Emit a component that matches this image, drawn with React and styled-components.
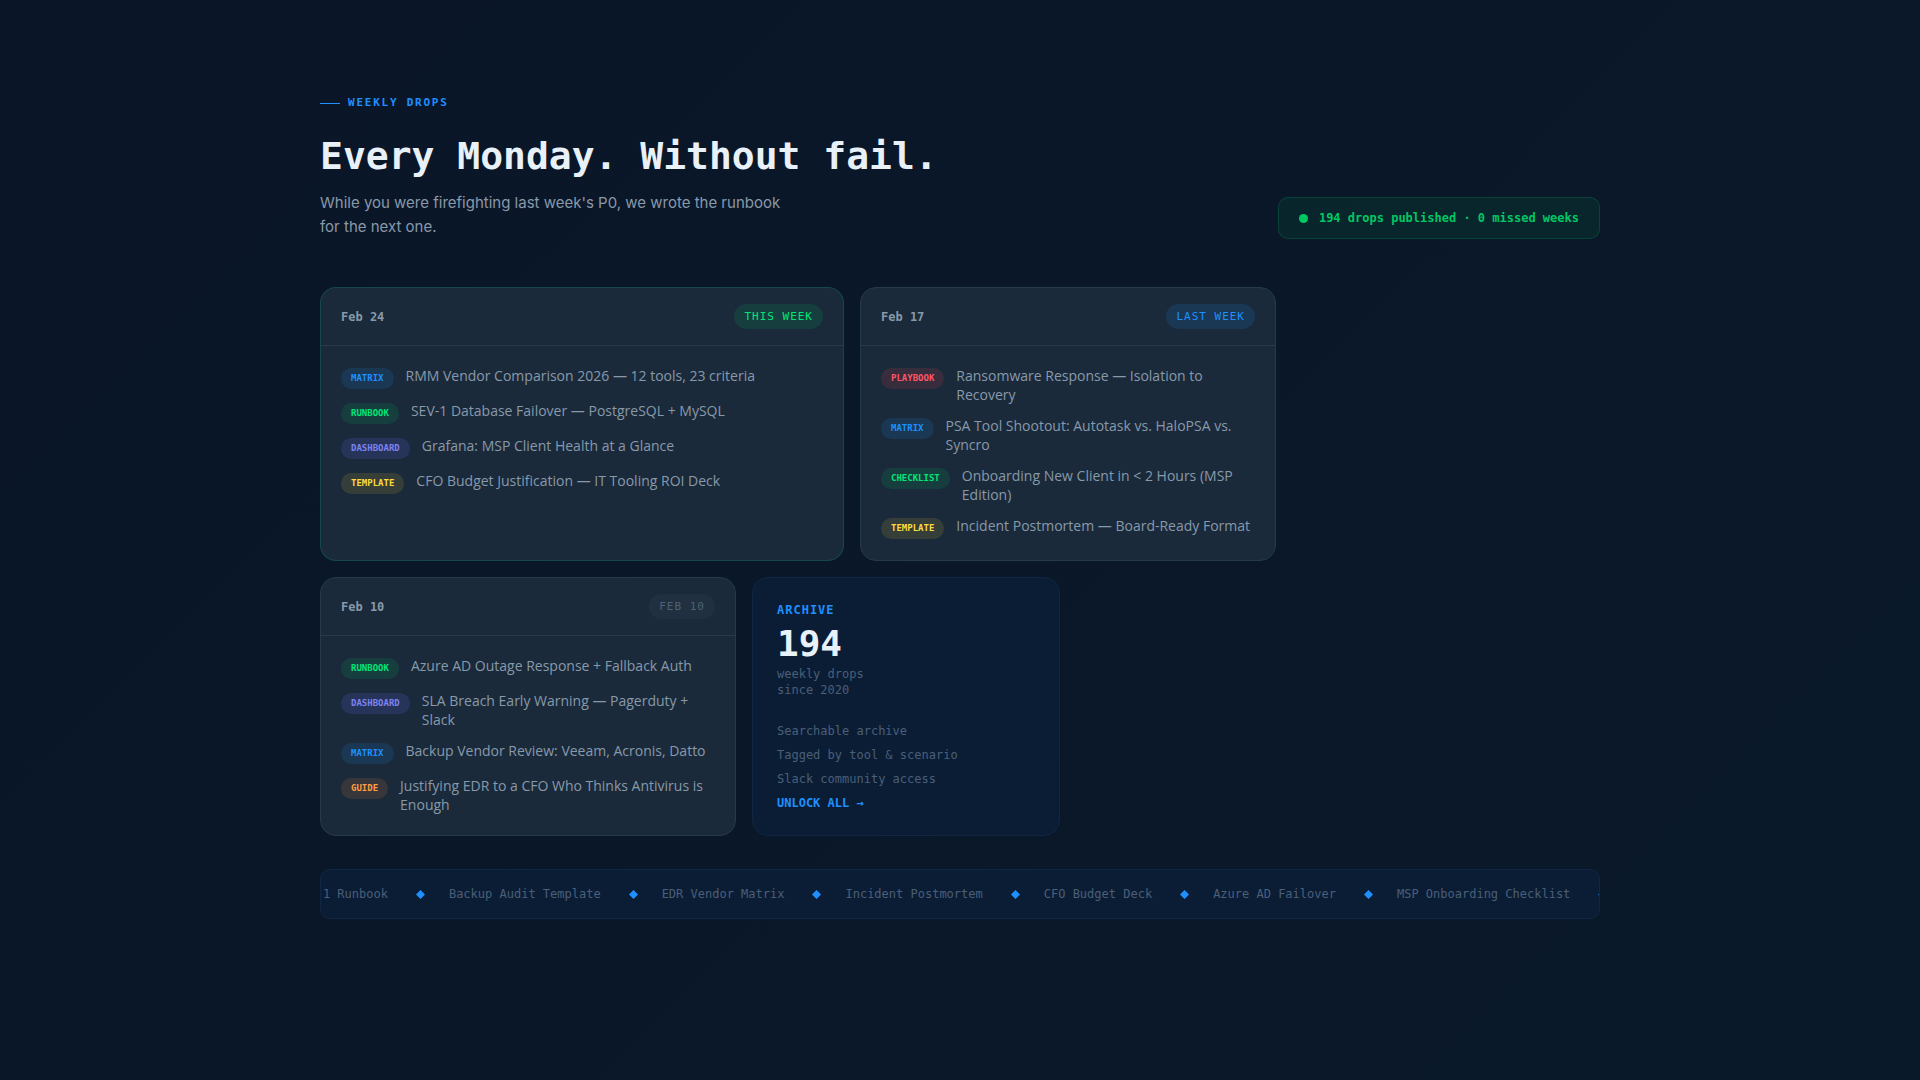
import styled, { createGlobalStyle, css } from "styled-components";

const mono = '"DejaVu Sans Mono", "Liberation Mono", monospace';
const sans = '"Open Sans", "Liberation Sans", sans-serif';

const GlobalStyle = createGlobalStyle`
  * {
    box-sizing: border-box;
  }
  body {
    margin: 0;
    min-height: 100vh;
    background: linear-gradient(135deg, #0a1628 0%, #0a1929 100%);
    color: #e8f0f8;
    font-family: ${sans};
  }
`;

const Section = styled.section`
  max-width: 1360px;
  margin: 0 auto;
  padding: 95px 40px;
`;

const Header = styled.header`
  display: flex;
  justify-content: space-between;
  align-items: flex-end;
  gap: 32px;
  margin-bottom: 48px;
`;

const Eyebrow = styled.p`
  display: flex;
  align-items: center;
  gap: 8px;
  margin: 0 0 22px;
  font: 700 11px/16px ${mono};
  letter-spacing: 0.16em;
  color: #1e90ff;
  &::before {
    content: "";
    width: 20px;
    height: 1px;
    background: #1e90ff;
  }
`;

const Title = styled.h2`
  margin: 0 0 12px;
  font: 700 38px/46px ${mono};
`;

const Lead = styled.p`
  max-width: 480px;
  margin: 0;
  font-family: Inter, ${sans};
  font-size: 15px;
  line-height: 24px;
  color: #8899aa;
`;

const Streak = styled.div`
  display: flex;
  align-items: center;
  gap: 11px;
  flex-shrink: 0;
  padding: 12px 20px;
  border: 1px solid rgba(0, 200, 100, 0.18);
  border-radius: 10px;
  background: rgba(0, 200, 100, 0.08);
  font: 700 12px/16px ${mono};
  color: #00c864;
`;

const Dot = styled.span`
  width: 9px;
  height: 9px;
  border-radius: 50%;
  background: #00c864;
`;

const Grid = styled.div`
  display: grid;
  grid-template-columns: repeat(12, 1fr);
  gap: 16px;
`;

const Card = styled.article`
  grid-column: span ${(p) => p.$span};
  border: 1px solid ${(p) => (p.$current ? "rgba(0, 200, 140, 0.2)" : "#263a4c")};
  border-radius: 16px;
  background: #1a2a3a;
`;

const CardHead = styled.div`
  display: flex;
  justify-content: space-between;
  align-items: center;
  padding: 16px 20px;
  border-bottom: 1px solid #263a4c;
`;

const DropDate = styled.h3`
  margin: 0;
  font: 700 12px/16px ${mono};
  color: #8899aa;
`;

const tones = {
  green: css`
    color: #00e676;
    background: rgba(0, 200, 100, 0.13);
  `,
  blue: css`
    color: #1e90ff;
    background: rgba(30, 144, 255, 0.13);
  `,
  violet: css`
    color: #7c83f0;
    background: rgba(99, 102, 241, 0.18);
  `,
  yellow: css`
    color: #ffd93d;
    background: rgba(255, 217, 61, 0.12);
  `,
  red: css`
    color: #ff5566;
    background: rgba(255, 71, 87, 0.13);
  `,
  orange: css`
    color: #ff9f43;
    background: rgba(255, 140, 60, 0.13);
  `,
  muted: css`
    color: #4f6172;
    background: rgba(136, 153, 170, 0.06);
  `,
};

const WeekBadge = styled.span`
  padding: 4px 10px;
  border-radius: 20px;
  font: 400 11px/17px ${mono};
  letter-spacing: 1px;
  ${(p) => tones[p.$tone]}
`;

const DropList = styled.ul`
  display: flex;
  flex-direction: column;
  gap: 12px;
  margin: 0;
  padding: 20px 20px 21px;
  list-style: none;
`;

const DropItem = styled.li`
  display: flex;
  align-items: flex-start;
  gap: 12px;
  font-size: 14px;
  line-height: 19px;
  color: #8899aa;
`;

const Tag = styled.span`
  flex-shrink: 0;
  margin-top: 2px;
  padding: 0 10px;
  border-radius: 20px;
  font: 700 9px/21px ${mono};
  ${(p) => tones[p.$tone]}
`;

const Archive = styled.aside`
  grid-column: span 3;
  display: flex;
  flex-direction: column;
  justify-content: space-between;
  padding: 24px;
  border: 1px solid #0f2744;
  border-radius: 16px;
  background: #0b1d35;
  font: 400 12px/16px ${mono};
  color: #4a5f78;
`;

const ArchiveLabel = styled.h3`
  margin: 0 0 8px;
  font: 700 12px/16px ${mono};
  letter-spacing: 1px;
  color: #1e90ff;
`;

const Count = styled.div`
  margin-bottom: 4px;
  font: 700 36px/36px ${mono};
  color: #e8f0f8;
`;

const Perks = styled.ul`
  display: flex;
  flex-direction: column;
  gap: 8px;
  margin: 0;
  padding: 0;
  list-style: none;
`;

const Unlock = styled.a`
  color: #1e90ff;
  font-weight: 700;
  text-decoration: none;
`;

const Ticker = styled.div`
  margin-top: 33px;
  padding: 16px 0;
  overflow: hidden;
  border: 1px solid #0f2744;
  border-radius: 10px;
  background: #0b1d35;
`;

const Track = styled.div`
  display: flex;
  width: max-content;
  margin-left: -27px;
`;

const TickerItem = styled.span`
  display: flex;
  align-items: center;
  font: 400 12px/16px ${mono};
  color: #4a5f78;
  svg {
    margin: 1px 24px 0 28px;
  }
`;

const weeks = [
  {
    date: "Feb 24",
    badge: "THIS WEEK",
    tone: "green",
    span: 5,
    current: true,
    drops: [
      ["MATRIX", "blue", "RMM Vendor Comparison 2026 — 12 tools, 23 criteria"],
      ["RUNBOOK", "green", "SEV-1 Database Failover — PostgreSQL + MySQL"],
      ["DASHBOARD", "violet", "Grafana: MSP Client Health at a Glance"],
      ["TEMPLATE", "yellow", "CFO Budget Justification — IT Tooling ROI Deck"],
    ],
  },
  {
    date: "Feb 17",
    badge: "LAST WEEK",
    tone: "blue",
    span: 4,
    drops: [
      ["PLAYBOOK", "red", "Ransomware Response — Isolation to Recovery"],
      ["MATRIX", "blue", "PSA Tool Shootout: Autotask vs. HaloPSA vs. Syncro"],
      ["CHECKLIST", "green", "Onboarding New Client in < 2 Hours (MSP Edition)"],
      ["TEMPLATE", "yellow", "Incident Postmortem — Board-Ready Format"],
    ],
  },
  {
    date: "Feb 10",
    badge: "FEB 10",
    tone: "muted",
    span: 4,
    drops: [
      ["RUNBOOK", "green", "Azure AD Outage Response + Fallback Auth"],
      ["DASHBOARD", "violet", "SLA Breach Early Warning — Pagerduty + Slack"],
      ["MATRIX", "blue", "Backup Vendor Review: Veeam, Acronis, Datto"],
      ["GUIDE", "orange", "Justifying EDR to a CFO Who Thinks Antivirus is Enough"],
    ],
  },
];

const ticker = [
  "SEV-1 Runbook",
  "Backup Audit Template",
  "EDR Vendor Matrix",
  "Incident Postmortem",
  "CFO Budget Deck",
  "Azure AD Failover",
  "MSP Onboarding Checklist",
];

function WeekCard({ week }) {
  return (
    <Card $span={week.span} $current={week.current}>
      <CardHead>
        <DropDate>{week.date}</DropDate>
        <WeekBadge $tone={week.tone}>{week.badge}</WeekBadge>
      </CardHead>
      <DropList>
        {week.drops.map(([tag, tone, title]) => (
          <DropItem key={title}>
            <Tag $tone={tone}>{tag}</Tag>
            <span>{title}</span>
          </DropItem>
        ))}
      </DropList>
    </Card>
  );
}

export default function App() {
  return (
    <>
      <GlobalStyle />
      <Section>
        <Header>
          <div>
            <Eyebrow>WEEKLY DROPS</Eyebrow>
            <Title>Every Monday. Without fail.</Title>
            <Lead>
              While you were firefighting last week's P0, we wrote the runbook for the next one.
            </Lead>
          </div>
          <Streak>
            <Dot />
            194 drops published · 0 missed weeks
          </Streak>
        </Header>

        <Grid>
          {weeks.map((week) => (
            <WeekCard key={week.date} week={week} />
          ))}
          <Archive>
            <div>
              <ArchiveLabel>ARCHIVE</ArchiveLabel>
              <Count>194</Count>
              weekly drops
              <br />
              since 2020
            </div>
            <Perks>
              <li>Searchable archive</li>
              <li>Tagged by tool &amp; scenario</li>
              <li>Slack community access</li>
              <li>
                <Unlock href="#unlock">UNLOCK ALL →</Unlock>
              </li>
            </Perks>
          </Archive>
        </Grid>

        <Ticker>
          <Track>
            {ticker.map((name) => (
              <TickerItem key={name}>
                {name}
                <svg width="9" height="9" viewBox="0 0 9 9" aria-hidden="true">
                  <path d="M4.5 0 9 4.5 4.5 9 0 4.5Z" fill="#1e90ff" />
                </svg>
              </TickerItem>
            ))}
          </Track>
        </Ticker>
      </Section>
    </>
  );
}
